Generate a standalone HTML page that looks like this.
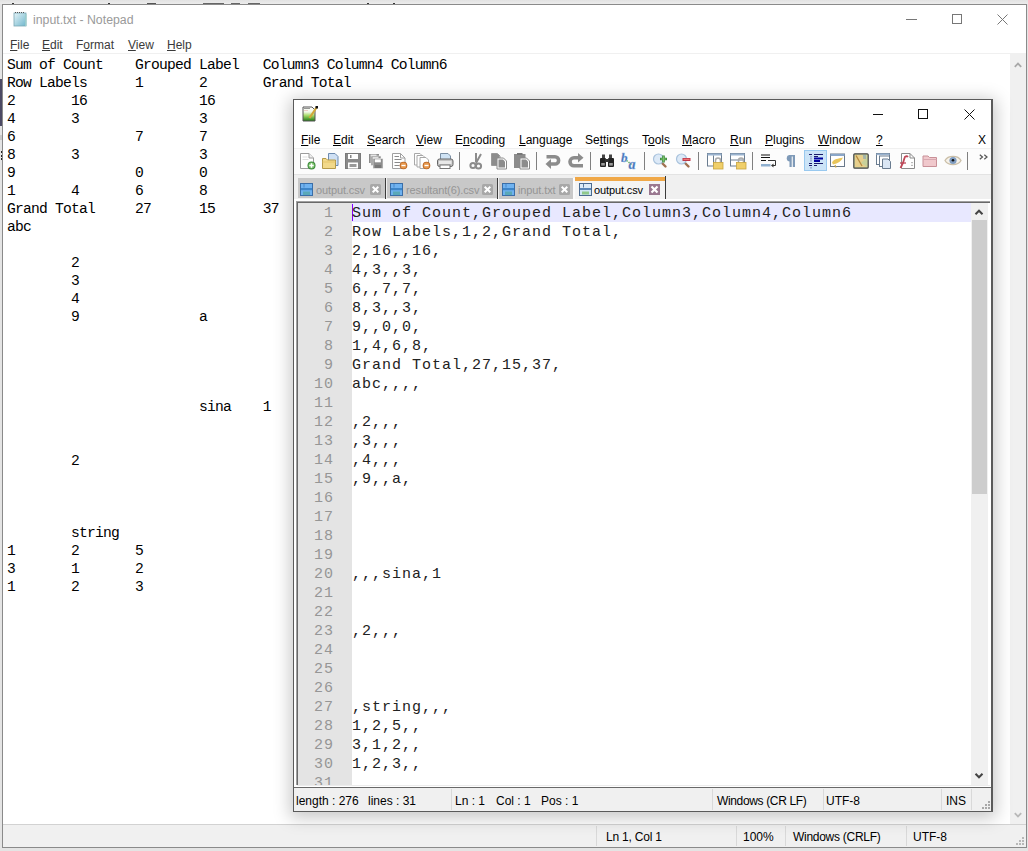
<!DOCTYPE html>
<html><head><meta charset="utf-8">
<style>
*{margin:0;padding:0;box-sizing:border-box}
html,body{width:1028px;height:851px;overflow:hidden;background:#e4e4e4;font-family:"Liberation Sans",sans-serif}
.a{position:absolute}
.npt{font-size:12px;color:#9a9a9a;white-space:nowrap}
.mn{font-size:12px;color:#3a3a3a;white-space:nowrap;line-height:14px}
.mn u,.pm u{text-decoration:underline;text-underline-offset:1px}
#nptext{left:7px;top:56px;font-family:"Liberation Mono",monospace;font-size:14.67px;letter-spacing:-0.8px;line-height:18px;white-space:pre;tab-size:8;color:#000}
.pm{font-size:12px;color:#000;white-space:nowrap;line-height:14px}
#ed{font-family:"Liberation Mono",monospace;font-size:15px;letter-spacing:1px;line-height:19px;white-space:pre;color:#222}
#ln{font-family:"Liberation Mono",monospace;font-size:15px;letter-spacing:1px;line-height:19px;white-space:pre;color:#969696;text-align:right}
.st{font-size:12px;color:#000;white-space:nowrap;line-height:14px}
.tbt{font-size:11px;white-space:nowrap;line-height:13px;letter-spacing:-0.12px}
.sep{background:#d9d9d9;width:1px}
</style></head><body>

<!-- top band -->
<div class="a" style="left:0;top:0;width:1028px;height:4px;background:linear-gradient(#e2e2e2,#ececec)"></div>
<div class="a" style="left:0;top:79px;width:2px;height:47px;background:#4c4a64"></div>
<div class="a" style="left:0;top:135px;width:2px;height:5px;background:#c8c8c8"></div>
<div class="a" style="left:1px;top:151px;width:2px;height:2px;background:#222"></div><div class="a" style="left:1px;top:155px;width:2px;height:2px;background:#222"></div><div class="a" style="left:1px;top:158px;width:2px;height:2px;background:#222"></div>
<svg class="a" style="left:0;top:2px" width="520" height="3" viewBox="0 0 520 3" fill="#333">
<rect x="12" y="1" width="2" height="2"/><rect x="61" y="2" width="2" height="1"/><rect x="78" y="2" width="2" height="1"/><rect x="108" y="1" width="2" height="2"/>
<rect x="147" y="1" width="9" height="2" fill="#555"/><rect x="176" y="2" width="2" height="1"/>
<rect x="203" y="1" width="21" height="2" fill="#666"/><rect x="231" y="1" width="9" height="2" fill="#666"/><rect x="248" y="1" width="12" height="2" fill="#666"/>
<rect x="298" y="2" width="11" height="1" fill="#777"/><rect x="320" y="2" width="11" height="1" fill="#777"/><rect x="367" y="1" width="2" height="2"/><rect x="393" y="1" width="2" height="2"/>
</svg>
<!-- ============ NOTEPAD (background) ============ -->
<div class="a" style="left:2px;top:4px;width:1025px;height:844px;background:#fff;border:1px solid #8a8a8a"></div>
<!-- notepad icon -->
<svg class="a" style="left:12px;top:11px" width="16" height="16" viewBox="0 0 16 16">
 <defs><linearGradient id="npg" x1="0" y1="0" x2="1" y2="1"><stop offset="0" stop-color="#e6f4f8"/><stop offset="1" stop-color="#6fb6cc"/></linearGradient></defs>
 <rect x="2" y="2" width="12" height="13" fill="url(#npg)" stroke="#7aa7b5" stroke-width="0.8"/>
 <path d="M3 1.5 h10" stroke="#555" stroke-width="1" stroke-dasharray="1 1"/>
 <rect x="13" y="3" width="1.5" height="12" fill="#9cc"/>
</svg>
<div class="a npt" style="left:33px;top:13px;font-size:12.3px">input.txt - Notepad</div>
<!-- notepad title buttons -->
<div class="a" style="left:906px;top:19px;width:11px;height:1px;background:#777"></div>
<div class="a" style="left:952px;top:14px;width:10px;height:10px;border:1px solid #777"></div>
<svg class="a" style="left:997px;top:14px" width="11" height="11" viewBox="0 0 11 11"><path d="M0.5 0.5 L10.5 10.5 M10.5 0.5 L0.5 10.5" stroke="#777" stroke-width="1"/></svg>
<!-- notepad menu -->
<div class="a mn" style="left:10px;top:38px"><u>F</u>ile</div>
<div class="a mn" style="left:42px;top:38px"><u>E</u>dit</div>
<div class="a mn" style="left:76px;top:38px">F<u>o</u>rmat</div>
<div class="a mn" style="left:128px;top:38px"><u>V</u>iew</div>
<div class="a mn" style="left:167px;top:38px"><u>H</u>elp</div>
<div class="a" style="left:3px;top:53px;width:1023px;height:1px;background:#f0f0f0"></div>
<!-- notepad scrollbar -->
<div class="a" style="left:1010px;top:54px;width:16px;height:770px;background:#f0f0f0"></div>
<svg class="a" style="left:1013px;top:61px" width="10" height="8" viewBox="0 0 10 8"><path d="M1.8 5.8 L5 2.6 L8.2 5.8" fill="none" stroke="#a8a8a8" stroke-width="1.8"/></svg>
<svg class="a" style="left:1013px;top:811px" width="10" height="8" viewBox="0 0 10 8"><path d="M1.8 2.2 L5 5.4 L8.2 2.2" fill="none" stroke="#b8b8b8" stroke-width="1.8"/></svg>
<!-- notepad text -->
<div id="nptext" class="a">Sum of Count	Grouped Label	Column3	Column4	Column6
Row Labels	1	2	Grand Total
2	16		16
4	3		3
6		7	7
8	3		3
9		0	0
1	4	6	8
Grand Total	27	15	37
abc

	2
	3
	4
	9		a




			sina	1


	2



	string
1	2	5
3	1	2
1	2	3</div>
<!-- notepad status bar -->
<div class="a" style="left:3px;top:824px;width:1023px;height:23px;background:#f0f0f0;border-top:1px solid #d2d2d2"></div>
<div class="a sep" style="left:596px;top:826px;height:20px"></div>
<div class="a sep" style="left:736px;top:826px;height:20px"></div>
<div class="a sep" style="left:785px;top:826px;height:20px"></div>
<div class="a sep" style="left:906px;top:826px;height:20px"></div>
<div class="a st" style="left:606px;top:830px;letter-spacing:-0.2px">Ln 1, Col 1</div>
<div class="a st" style="left:743px;top:830px">100%</div>
<div class="a st" style="left:793px;top:830px;letter-spacing:-0.28px">Windows (CRLF)</div>
<div class="a st" style="left:913px;top:830px">UTF-8</div>


<!-- ============ NOTEPAD++ (foreground) ============ -->
<div class="a" style="left:293px;top:99px;width:700px;height:713px;background:#fff;border:1px solid #5a5a5a;border-right:2px solid #5a5a5a;box-shadow:0 3px 16px 3px rgba(0,0,0,0.22)"></div>
<!-- npp icon -->
<svg class="a" style="left:302px;top:106px" width="16" height="16" viewBox="0 0 16 16">
 <defs><linearGradient id="ppg" x1="0" y1="0" x2="0" y2="1"><stop offset="0" stop-color="#fff"/><stop offset="0.35" stop-color="#f2f8e8"/><stop offset="0.6" stop-color="#a8dc6a"/><stop offset="1" stop-color="#1f7a12"/></linearGradient></defs>
 <path d="M1 1 H10 L13 4 V15 H1 Z" fill="url(#ppg)" stroke="#555" stroke-width="1"/>
 <path d="M2.5 2.5 h1 M4.5 2.5 h1 M6.5 2.5 h1" stroke="#333" stroke-width="1"/>
 <path d="M2.5 4.5 h1 M4.5 4.5 h1" stroke="#d88" stroke-width="0.8"/>
 <path d="M7.5 12 L14.5 1.5" stroke="#d1a83a" stroke-width="2.2"/>
 <rect x="13.5" y="0" width="2.5" height="2.5" fill="#111"/>
</svg>
<!-- npp title buttons -->
<div class="a" style="left:873px;top:114px;width:10px;height:1px;background:#111"></div>
<div class="a" style="left:918px;top:109px;width:10px;height:10px;border:1px solid #111"></div>
<svg class="a" style="left:964px;top:109px" width="11" height="11" viewBox="0 0 11 11"><path d="M0.5 0.5 L10.5 10.5 M10.5 0.5 L0.5 10.5" stroke="#111" stroke-width="1"/></svg>
<!-- npp menu -->
<div class="a pm" style="left:301px;top:133px"><u>F</u>ile</div>
<div class="a pm" style="left:333px;top:133px"><u>E</u>dit</div>
<div class="a pm" style="left:367px;top:133px"><u>S</u>earch</div>
<div class="a pm" style="left:416px;top:133px"><u>V</u>iew</div>
<div class="a pm" style="left:455px;top:133px">E<u>n</u>coding</div>
<div class="a pm" style="left:519px;top:133px"><u>L</u>anguage</div>
<div class="a pm" style="left:585px;top:133px">Se<u>t</u>tings</div>
<div class="a pm" style="left:642px;top:133px">T<u>o</u>ols</div>
<div class="a pm" style="left:682px;top:133px"><u>M</u>acro</div>
<div class="a pm" style="left:730px;top:133px"><u>R</u>un</div>
<div class="a pm" style="left:765px;top:133px"><u>P</u>lugins</div>
<div class="a pm" style="left:818px;top:133px"><u>W</u>indow</div>
<div class="a pm" style="left:876px;top:133px"><u>?</u></div>
<div class="a pm" style="left:978px;top:133px">X</div>
<!-- toolbar -->
<div class="a" style="left:294px;top:148px;width:697px;height:1px;background:#f0f0f0"></div>
<div class="a" style="left:294px;top:149px;width:697px;height:25px;background:#fcfcfc"></div>
<div class="a" style="left:294px;top:174px;width:697px;height:1px;background:#e3e3e3"></div>
<div id="tb">
<!-- New -->
<svg class="a" style="left:299px;top:152px" width="18" height="18" viewBox="0 0 18 18">
 <path d="M1.5 1.5 H10 L14.5 6 V16.5 H1.5 Z" fill="#fff" stroke="#9c9c9c"/>
 <path d="M10 1.5 V6 H14.5" fill="#eee" stroke="#9c9c9c"/>
 <path d="M3.5 5 h5 M3.5 7.5 h6" stroke="#ddd"/>
 <circle cx="12.5" cy="13.5" r="4" fill="#3d8a3d"/><circle cx="12.5" cy="13.5" r="3" fill="#7cc36a"/>
 <path d="M12.5 11.3 v4.4 M10.3 13.5 h4.4" stroke="#fff" stroke-width="1.4"/>
</svg>
<!-- Open -->
<svg class="a" style="left:321px;top:152px" width="18" height="18" viewBox="0 0 18 18">
 <path d="M7.5 1.5 H14 L17 4.5 V13.5 H7.5 Z" fill="#cfe0f4" stroke="#6d8bb0"/>
 <path d="M1.5 6.5 H5 L6.5 8 H14.5 V16.5 H1.5 Z" fill="#f2d98a" stroke="#b59a4a"/>
 <path d="M1.5 10 H14.5" stroke="#e6c56a"/>
</svg>
<!-- Save -->
<svg class="a" style="left:345px;top:153px" width="16" height="16" viewBox="0 0 16 16">
 <rect x="0.5" y="0.5" width="15" height="15" fill="#8a8a8a" stroke="#7a7a7a"/>
 <rect x="3" y="1" width="10" height="5" fill="#fff"/><rect x="5" y="2" width="1.5" height="3" fill="#888"/>
 <rect x="3" y="9.5" width="10" height="6" fill="#fff"/><rect x="4.5" y="11" width="7" height="3" fill="#999"/>
</svg>
<!-- Save all -->
<svg class="a" style="left:368px;top:153px" width="16" height="16" viewBox="0 0 16 16">
 <rect x="1" y="1" width="10" height="9" fill="#8c8c8c"/><rect x="2.5" y="1.5" width="6" height="1.5" fill="#e0e0e0"/>
 <rect x="3" y="3" width="10" height="9.5" fill="#8c8c8c" stroke="#f4f4f4" stroke-width="0.6"/><rect x="4.5" y="3.8" width="6" height="1.6" fill="#e0e0e0"/>
 <rect x="5" y="5.5" width="10" height="10" fill="#8c8c8c" stroke="#f4f4f4" stroke-width="0.6"/><rect x="6.8" y="6.3" width="6" height="3" fill="#fff"/><rect x="7" y="12" width="6" height="3" fill="#777"/>
</svg>
<!-- Close -->
<svg class="a" style="left:391px;top:152px" width="18" height="18" viewBox="0 0 18 18">
 <path d="M1.5 1.5 H9.5 L14 6 V16.5 H1.5 Z" fill="#fff" stroke="#a0a0a0"/>
 <path d="M9.5 1.5 V6 H14" fill="none" stroke="#a0a0a0"/>
 <path d="M3.5 4.5 h4.5 M3.5 7.5 h7 M3.5 10.5 h6 M3.5 13.5 h5" stroke="#8a8a8a" stroke-width="1"/>
 <circle cx="12.5" cy="13.5" r="3.8" fill="#b8621e"/><circle cx="12.5" cy="13.5" r="2.9" fill="#e89a50"/>
 <path d="M10.5 13.5 h4" stroke="#fff" stroke-width="1.3"/>
</svg>
<!-- Close all -->
<svg class="a" style="left:414px;top:152px" width="18" height="18" viewBox="0 0 18 18">
 <path d="M0.5 1.5 H6 L8 3.5 V13 H0.5 Z" fill="#fff" stroke="#a8a8a8"/>
 <path d="M3 3.5 H9 L11 5.5 V15 H3 Z" fill="#fff" stroke="#a8a8a8"/>
 <path d="M6 5.5 H12 L14.5 8 V16.5 H6 Z" fill="#fff" stroke="#a8a8a8"/>
 <circle cx="12.5" cy="13.5" r="3.8" fill="#b8621e"/><circle cx="12.5" cy="13.5" r="2.9" fill="#e89a50"/>
 <path d="M10.5 13.5 h4" stroke="#fff" stroke-width="1.3"/>
</svg>
<!-- Print -->
<svg class="a" style="left:437px;top:152px" width="17" height="18" viewBox="0 0 17 18">
 <path d="M3.5 1.5 H11 L13.5 4 V8 H3.5 Z" fill="#cfe3f5" stroke="#7a8ea3"/>
 <rect x="0.5" y="7" width="15.5" height="7.5" rx="2" fill="#c4c4c4" stroke="#666"/>
 <rect x="2" y="9" width="12.5" height="3" fill="#e8e8e8"/>
 <rect x="3" y="13" width="10" height="3.5" fill="#fff" stroke="#777"/>
</svg>
<div class="a" style="left:459px;top:152px;width:1px;height:18px;background:#808080"></div>
<!-- Cut -->
<svg class="a" style="left:469px;top:152px" width="14" height="18" viewBox="0 0 14 18">
 <path d="M7 1 V10 M12 2 L7 11" stroke="#8c8c8c" stroke-width="2"/>
 <circle cx="4" cy="13.5" r="2.6" fill="none" stroke="#8c8c8c" stroke-width="2"/>
 <circle cx="9.5" cy="14" r="2.6" fill="none" stroke="#8c8c8c" stroke-width="2"/>
</svg>
<!-- Copy -->
<svg class="a" style="left:490px;top:152px" width="18" height="18" viewBox="0 0 18 18">
 <path d="M1.5 1.5 H7.5 L10 4 V13.5 H1.5 Z" fill="#8c8c8c" stroke="#fff" stroke-width="0.8"/>
 <path d="M1.5 1.5 H7.5 L10 4 V13.5 H1.5 Z" fill="none" stroke="#999" stroke-width="1"/>
 <path d="M7 6 H13.5 L16.5 9 V17 H7 Z" fill="#fff" stroke="#8a8a8a"/>
 <path d="M8.5 7.5 H13 L15 9.5 V15.5 H8.5 Z" fill="#8c8c8c"/>
</svg>
<!-- Paste -->
<svg class="a" style="left:513px;top:152px" width="18" height="18" viewBox="0 0 18 18">
 <rect x="1" y="2" width="11.5" height="14" fill="#8c8c8c"/>
 <rect x="4" y="1" width="5.5" height="2" fill="#777"/>
 <path d="M7 6 H13.5 L16.5 9 V17 H7 Z" fill="#fff" stroke="#8a8a8a"/>
 <path d="M8.5 7.5 H13 L15 9.5 V15.5 H8.5 Z" fill="#8c8c8c"/>
</svg>
<div class="a" style="left:536px;top:152px;width:1px;height:18px;background:#808080"></div>
<!-- Undo -->
<svg class="a" style="left:545px;top:153px" width="16" height="17" viewBox="0 0 16 17">
 <path d="M1.5 3.8 H10 A3.6 3.6 0 0 1 10 11 H5" fill="none" stroke="#8c8c8c" stroke-width="3.6"/>
 <path d="M0.5 11 L6 6 V16 Z" fill="#8c8c8c"/>
</svg>
<!-- Redo -->
<svg class="a" style="left:568px;top:153px" width="16" height="17" viewBox="0 0 16 17">
 <path d="M15 12.8 H6 A4 4 0 0 1 6 4.8 H10" fill="none" stroke="#8c8c8c" stroke-width="3.6"/>
 <path d="M15.5 4.8 L10 0 V9.6 Z" fill="#8c8c8c"/>
</svg>
<div class="a" style="left:590px;top:152px;width:1px;height:18px;background:#808080"></div>
<!-- Find -->
<svg class="a" style="left:600px;top:154px" width="14" height="14" viewBox="0 0 14 14">
 <rect x="2" y="0.5" width="3" height="4" fill="#444"/><rect x="9" y="0.5" width="3" height="4" fill="#444"/>
 <rect x="0" y="4" width="6" height="9" rx="1" fill="#222"/><rect x="8" y="4" width="6" height="9" rx="1" fill="#222"/>
 <rect x="5" y="5" width="4" height="3" fill="#333"/>
 <rect x="1.2" y="9" width="3.6" height="2.6" fill="#9a9a9a"/><rect x="9.2" y="9" width="3.6" height="2.6" fill="#9a9a9a"/>
</svg>
<!-- Replace -->
<svg class="a" style="left:621px;top:152px" width="18" height="18" viewBox="0 0 18 18">
 <path d="M5.5 8.5 L10.5 12.5" stroke="#6bb06b" stroke-width="1.6" stroke-dasharray="1.5 1"/>
 <text x="0" y="10" font-family="Liberation Serif" font-style="italic" font-weight="bold" font-size="13" fill="#3f6fb5" stroke="#8fb0e0" stroke-width="0.4">b</text>
 <text x="7.5" y="17" font-family="Liberation Serif" font-style="italic" font-weight="bold" font-size="14" fill="#3f6fb5" stroke="#8fb0e0" stroke-width="0.4">a</text>
</svg>
<div class="a" style="left:644px;top:152px;width:1px;height:18px;background:#808080"></div>
<!-- Zoom in -->
<svg class="a" style="left:652px;top:152px" width="17" height="17" viewBox="0 0 17 17">
 <path d="M9 10 L13.5 14.5" stroke="#a07050" stroke-width="2.4" stroke-linecap="round"/>
 <circle cx="6.5" cy="7" r="5" fill="#dce9f7" stroke="#aac3dd" stroke-width="1.2"/>
 <path d="M11.5 3.5 v7 M8 7 h7" stroke="#3d8a3d" stroke-width="2.6"/>
 <path d="M11.5 4.3 v5.4 M8.8 7 h5.4" stroke="#7cc36a" stroke-width="1"/>
</svg>
<!-- Zoom out -->
<svg class="a" style="left:675px;top:152px" width="17" height="17" viewBox="0 0 17 17">
 <path d="M9 10 L13.5 14.5" stroke="#a07050" stroke-width="2.4" stroke-linecap="round"/>
 <circle cx="6.5" cy="7" r="5" fill="#dce9f7" stroke="#aac3dd" stroke-width="1.2"/>
 <rect x="7.5" y="6" width="8" height="3" fill="#c0394a"/><rect x="8.5" y="6.8" width="6" height="1.2" fill="#e77"/>
</svg>
<div class="a" style="left:698px;top:152px;width:1px;height:18px;background:#808080"></div>
<!-- Sync V -->
<svg class="a" style="left:706px;top:152px" width="18" height="18" viewBox="0 0 18 18">
 <rect x="1.5" y="1.5" width="14" height="12.5" fill="#fff" stroke="#6a7c90"/>
 <rect x="1.5" y="1.5" width="14" height="2" fill="#9ab3cf"/>
 <path d="M7.5 3.5 V14" stroke="#6a7c90"/>
 <path d="M9.5 11 V8.5 A2.5 2.5 0 0 1 14.5 8.5 V11" fill="none" stroke="#aaa" stroke-width="1.5"/>
 <rect x="7.5" y="10.5" width="9.5" height="6.5" fill="#f0cf6a" stroke="#c9a540" stroke-width="0.8"/>
</svg>
<!-- Sync H -->
<svg class="a" style="left:729px;top:152px" width="18" height="18" viewBox="0 0 18 18">
 <rect x="1.5" y="1.5" width="14" height="12.5" fill="#fff" stroke="#6a7c90"/>
 <rect x="1.5" y="1.5" width="14" height="2" fill="#9ab3cf"/>
 <path d="M1.5 8 H15.5" stroke="#6a7c90"/>
 <path d="M9.5 11 V8.5 A2.5 2.5 0 0 1 14.5 8.5 V11" fill="none" stroke="#aaa" stroke-width="1.5"/>
 <rect x="7.5" y="10.5" width="9.5" height="6.5" fill="#f0cf6a" stroke="#c9a540" stroke-width="0.8"/>
</svg>
<div class="a" style="left:752px;top:152px;width:1px;height:18px;background:#808080"></div>
<!-- Word wrap -->
<svg class="a" style="left:760px;top:153px" width="18" height="16" viewBox="0 0 18 16">
 <path d="M1 2 h9 M1 4.5 h9 M1 7.5 h5" stroke="#111" stroke-width="1.2"/>
 <path d="M8 7.5 h7.5 V12.5 H12" fill="none" stroke="#333" stroke-width="1"/>
 <path d="M11 12.5 L13.5 10.5 V14.5 Z" fill="#333"/>
 <rect x="1" y="11" width="9.5" height="2.5" fill="#8fb0d0"/>
</svg>
<!-- Pilcrow -->
<svg class="a" style="left:786px;top:154px" width="10" height="14" viewBox="0 0 10 14">
 <path d="M4 1 A3 3 0 0 0 4 7.5" fill="#7f9ab8"/>
 <rect x="3.5" y="1" width="2.2" height="12" fill="#7f9ab8"/><rect x="6.8" y="1" width="2.2" height="12" fill="#7f9ab8"/>
 <rect x="3.5" y="1" width="5.5" height="1.5" fill="#7f9ab8"/>
</svg>
<!-- Indent guide (selected) -->
<div class="a" style="left:804px;top:150px;width:23px;height:21px;background:#cce4f7;border:1px solid #99c9ef"></div>
<svg class="a" style="left:808px;top:153px" width="16" height="16" viewBox="0 0 16 16">
 <path d="M1 1.5 h3 M1 10.5 h3 M1 12.5 h3" stroke="#1a1a6a" stroke-width="1.2"/>
 <path d="M3 3.5 v0.8 M3 5.5 v0.8 M3 7.5 v0.8 M3 14.5 v0.8" stroke="#1a1a6a" stroke-width="1"/>
 <path d="M6 1.5 h9 M6 3.5 h4 M6 10.5 h9 M6 12.5 h3" stroke="#1a1a6a" stroke-width="1.2"/>
 <rect x="6" y="4.5" width="9" height="2" fill="#0000a0"/><rect x="6" y="7" width="6" height="2" fill="#0000a0"/>
</svg>
<!-- Doc map -->
<svg class="a" style="left:829px;top:152px" width="17" height="17" viewBox="0 0 17 17">
 <rect x="1.5" y="2" width="14" height="12.5" fill="#fff" stroke="#69788a"/>
 <rect x="1.5" y="2" width="14" height="2" fill="#8aa6c8"/>
 <path d="M3 10.5 C5 6.5, 9 7, 14 5.5 C12.5 9, 9 11.5, 4 12.5 Z" fill="#e9c55a"/>
 <path d="M6 13 L7 15.5" stroke="#c9a540" stroke-width="1.2"/>
</svg>
<!-- Function map -->
<svg class="a" style="left:853px;top:153px" width="16" height="16" viewBox="0 0 16 16">
 <rect x="0.8" y="0.8" width="14.4" height="14.4" rx="1" fill="#c9d19a" stroke="#444" stroke-width="1.2"/>
 <path d="M2 2 L9 2 L12 6 L8 10 L14 14 L2 14 Z" fill="#e7cf8c"/>
 <path d="M3 2.5 L9 13" stroke="#b58a40" stroke-width="1.3"/>
 <path d="M10 3 h3 M10 5 h3" stroke="#7a98b8"/>
</svg>
<!-- Doc switcher -->
<svg class="a" style="left:875px;top:152px" width="17" height="18" viewBox="0 0 17 18">
 <rect x="1.5" y="1.5" width="13" height="11" fill="#fff" stroke="#6a7c90"/>
 <rect x="1.5" y="1.5" width="13" height="1.6" fill="#9ab3cf"/>
 <rect x="4.5" y="4" width="10" height="10.5" fill="#fff" stroke="#6a7c90"/>
 <path d="M7.5 7 H13 L15.5 9.5 V16.5 H7.5 Z" fill="#dbe7f5" stroke="#6a7c90"/>
</svg>
<!-- Function list -->
<svg class="a" style="left:899px;top:152px" width="17" height="18" viewBox="0 0 17 18">
 <path d="M2.5 1.5 H11 L15.5 6 V16.5 H2.5 Z" fill="#fff" stroke="#8a8a8a"/>
 <path d="M11 1.5 V6 H15.5" fill="none" stroke="#8a8a8a"/>
 <path d="M13 10 v1.2 M13 12.8 v1.2" stroke="#777"/>
 <path d="M1.5 16 L4 11 L5.5 6 A2 2 0 0 1 9 5" fill="none" stroke="#c04858" stroke-width="1.8"/>
 <path d="M1 11 h6" stroke="#c04858" stroke-width="1.3"/>
</svg>
<!-- Folder -->
<svg class="a" style="left:922px;top:155px" width="16" height="13" viewBox="0 0 16 13">
 <path d="M1 1 H6 L7.5 2.5 H14.5 V11.5 H1 Z" fill="#f0c8cc" stroke="#c89098"/>
 <path d="M1 4.5 H14.5" stroke="#d8a8b0"/>
</svg>
<!-- Eye -->
<svg class="a" style="left:944px;top:154px" width="18" height="13" viewBox="0 0 18 13">
 <path d="M1 6.5 C4 1, 14 1, 17 6.5 C14 12, 4 12, 1 6.5 Z" fill="#f6f2ea" stroke="#cbbfa8" stroke-width="1.3"/>
 <circle cx="9" cy="6.5" r="3.6" fill="#7f9cc0"/>
 <circle cx="9" cy="6.2" r="1.3" fill="#111"/>
</svg>
<div class="a" style="left:967px;top:152px;width:1px;height:18px;background:#808080"></div>
<svg class="a" style="left:979px;top:154px" width="10" height="6" viewBox="0 0 10 6"><path d="M0.8 0.8 L3.5 3 L0.8 5.2 M5.3 0.8 L8 3 L5.3 5.2" fill="none" stroke="#555" stroke-width="1.2"/></svg>
</div>
<!-- tab bar -->
<div class="a" style="left:294px;top:175px;width:697px;height:26px;background:#f0f0f0"></div>
<div id="tabs">
<div class="a" style="left:294px;top:199px;width:697px;height:2px;background:#f8f8f8"></div>
<!-- tab 1 -->
<div class="a" style="left:298px;top:178px;width:87px;height:20px;background:#c8c8c8"></div>
<div class="a" style="left:385px;top:178px;width:1px;height:21px;background:#3c3c3c"></div>
<!-- tab 2 -->
<div class="a" style="left:387px;top:178px;width:110px;height:20px;background:#c8c8c8"></div>
<div class="a" style="left:497px;top:178px;width:1px;height:21px;background:#3c3c3c"></div>
<!-- tab 3 -->
<div class="a" style="left:499px;top:178px;width:74px;height:21px;background:#c8c8c8"></div>
<div class="a" style="left:573px;top:178px;width:2px;height:21px;background:#fbfbfb"></div>
<!-- tab 4 active -->
<div class="a" style="left:575px;top:177px;width:91px;height:24px;background:#f4f4f4"></div>
<div class="a" style="left:575px;top:177px;width:91px;height:4px;background:#f0a848"></div>
<div class="a" style="left:665px;top:176px;width:1px;height:25px;background:#3c3c3c"></div>
<!-- floppies -->
<svg class="a" style="left:300px;top:183px" width="13" height="13" viewBox="0 0 13 13"><rect x="0.5" y="0.5" width="12" height="12" fill="#6fb2f0" stroke="#3a6ea8"/><rect x="3.5" y="1" width="1" height="3.5" fill="#4a88c8"/><rect x="1" y="5" width="11" height="2.2" fill="#3d85c8"/><rect x="3" y="8.5" width="7" height="3.5" fill="#5aa8b8"/></svg>
<svg class="a" style="left:390px;top:183px" width="13" height="13" viewBox="0 0 13 13"><rect x="0.5" y="0.5" width="12" height="12" fill="#6fb2f0" stroke="#3a6ea8"/><rect x="3.5" y="1" width="1" height="3.5" fill="#4a88c8"/><rect x="1" y="5" width="11" height="2.2" fill="#3d85c8"/><rect x="3" y="8.5" width="7" height="3.5" fill="#5aa8b8"/></svg>
<svg class="a" style="left:502px;top:183px" width="13" height="13" viewBox="0 0 13 13"><rect x="0.5" y="0.5" width="12" height="12" fill="#6fb2f0" stroke="#3a6ea8"/><rect x="3.5" y="1" width="1" height="3.5" fill="#4a88c8"/><rect x="1" y="5" width="11" height="2.2" fill="#3d85c8"/><rect x="3" y="8.5" width="7" height="3.5" fill="#5aa8b8"/></svg>
<svg class="a" style="left:579px;top:183px" width="13" height="13" viewBox="0 0 13 13"><rect x="0.5" y="0.5" width="12" height="12" fill="#dcebf8" stroke="#4a6a90"/><rect x="4" y="1" width="1" height="3.5" fill="#5a7aa0"/><rect x="1" y="5" width="11" height="2" fill="#5a86b8"/><rect x="1" y="7" width="11" height="5" fill="#cfe6f4"/><rect x="3" y="8.5" width="7" height="3" fill="#8fc88a"/></svg>
<!-- labels -->
<div class="a tbt" style="left:316px;top:184px;color:#959595">output.csv</div>
<div class="a tbt" style="left:406px;top:184px;color:#959595">resultant(6).csv</div>
<div class="a tbt" style="left:518px;top:184px;color:#959595">input.txt</div>
<div class="a tbt" style="left:594px;top:184px;color:#000">output.csv</div>
<!-- close boxes -->
<svg class="a" style="left:370px;top:184px" width="11" height="11" viewBox="0 0 11 11"><rect width="11" height="11" rx="1.5" fill="#a8a8a8"/><path d="M2.7 2.7 L8.3 8.3 M8.3 2.7 L2.7 8.3" stroke="#fff" stroke-width="2"/></svg>
<svg class="a" style="left:482px;top:184px" width="11" height="11" viewBox="0 0 11 11"><rect width="11" height="11" rx="1.5" fill="#a8a8a8"/><path d="M2.7 2.7 L8.3 8.3 M8.3 2.7 L2.7 8.3" stroke="#fff" stroke-width="2"/></svg>
<svg class="a" style="left:559px;top:184px" width="11" height="11" viewBox="0 0 11 11"><rect width="11" height="11" rx="1.5" fill="#a8a8a8"/><path d="M2.7 2.7 L8.3 8.3 M8.3 2.7 L2.7 8.3" stroke="#fff" stroke-width="2"/></svg>
<svg class="a" style="left:649px;top:184px" width="11" height="11" viewBox="0 0 11 11"><rect width="11" height="11" fill="#9a7890"/><path d="M2.5 2.5 L8.5 8.5 M8.5 2.5 L2.5 8.5" stroke="#fff" stroke-width="2.2"/></svg>
</div>
<!-- editor -->
<div class="a" style="left:294px;top:199px;width:697px;height:588px;background:#fff"></div>
<div class="a" style="left:296px;top:201px;width:694px;height:584px;background:#fff;border-top:1px solid #a0a0a0;border-left:1px solid #a0a0a0"></div>
<div class="a" style="left:297px;top:202px;width:693px;height:583px;background:#fff;border-top:1px solid #696969;border-left:1px solid #696969"></div>
<div class="a" style="left:297px;top:785px;width:693px;height:1px;background:#ececec"></div>
<div class="a" style="left:298px;top:203px;width:54px;height:582px;background:#e4e4e4"></div>
<div class="a" style="left:352px;top:203px;width:619px;height:19px;background:#e8e8ff"></div>
<div class="a" style="left:352px;top:204px;width:1px;height:17px;background:#8000ff"></div>
<div id="ln" class="a" style="left:298px;top:204px;width:36px;height:581px;overflow:hidden">1
2
3
4
5
6
7
8
9
10
11
12
13
14
15
16
17
18
19
20
21
22
23
24
25
26
27
28
29
30
31</div>
<div id="ed" class="a" style="left:352px;top:204px">Sum of Count,Grouped Label,Column3,Column4,Column6
Row Labels,1,2,Grand Total,
2,16,,16,
4,3,,3,
6,,7,7,
8,3,,3,
9,,0,0,
1,4,6,8,
Grand Total,27,15,37,
abc,,,,

,2,,,
,3,,,
,4,,,
,9,,a,




,,,sina,1


,2,,,



,string,,,
1,2,5,,
3,1,2,,
1,2,3,,</div>
<!-- editor scrollbar -->
<div class="a" style="left:971px;top:203px;width:17px;height:582px;background:#f0f0f0"></div>
<div class="a" style="left:972px;top:220px;width:15px;height:274px;background:#cdcdcd"></div>
<svg class="a" style="left:974px;top:208px" width="10" height="8" viewBox="0 0 10 8"><path d="M1.5 6.2 L5 2.7 L8.5 6.2" fill="none" stroke="#444" stroke-width="2"/></svg>
<svg class="a" style="left:974px;top:772px" width="10" height="8" viewBox="0 0 10 8"><path d="M1.5 1.8 L5 5.3 L8.5 1.8" fill="none" stroke="#444" stroke-width="2"/></svg>
<!-- npp status bar -->
<div class="a" style="left:294px;top:787px;width:697px;height:1px;background:#696969"></div>
<div class="a" style="left:294px;top:788px;width:697px;height:23px;background:#f0f0f0"></div>
<div class="a sep" style="left:451px;top:789px;height:21px"></div>
<div class="a sep" style="left:712px;top:789px;height:21px"></div>
<div class="a sep" style="left:823px;top:789px;height:21px"></div>
<div class="a sep" style="left:941px;top:789px;height:21px"></div>
<div class="a sep" style="left:971px;top:789px;height:21px"></div>
<div class="a st" style="left:296px;top:794px">length : 276</div>
<div class="a st" style="left:368px;top:794px">lines : 31</div>
<div class="a st" style="left:455px;top:794px">Ln : 1</div>
<div class="a st" style="left:496px;top:794px">Col : 1</div>
<div class="a st" style="left:541px;top:794px">Pos : 1</div>
<div class="a st" style="left:717px;top:794px;letter-spacing:-0.35px">Windows (CR LF)</div>
<div class="a st" style="left:826px;top:794px">UTF-8</div>
<div class="a st" style="left:946px;top:794px">INS</div>
<svg class="a" style="left:981px;top:800px" width="10" height="10" viewBox="0 0 10 10" fill="#a8a8a8"><rect x="7" y="1" width="2" height="2"/><rect x="4" y="4" width="2" height="2"/><rect x="7" y="4" width="2" height="2"/><rect x="1" y="7" width="2" height="2"/><rect x="4" y="7" width="2" height="2"/><rect x="7" y="7" width="2" height="2"/></svg>
<svg class="a" style="left:1015px;top:836px" width="10" height="10" viewBox="0 0 10 10" fill="#b8b8b8"><rect x="7" y="1" width="2" height="2"/><rect x="4" y="4" width="2" height="2"/><rect x="7" y="4" width="2" height="2"/><rect x="1" y="7" width="2" height="2"/><rect x="4" y="7" width="2" height="2"/><rect x="7" y="7" width="2" height="2"/></svg>
</body></html>
